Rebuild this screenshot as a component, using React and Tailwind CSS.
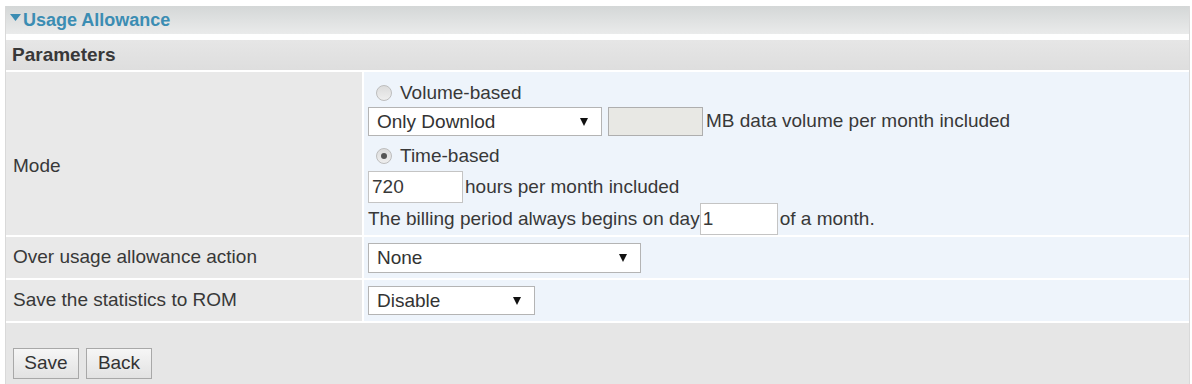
import { useState } from 'react';

const Arrow = () => (
  <svg width="8" height="8" viewBox="0 0 8 8" className="absolute right-[14px] top-1/2 -translate-y-1/2 pointer-events-none">
    <polygon points="0,0 8,0 4,8" fill="#111" />
  </svg>
);

const FakeSelect = ({ value, options, width, onChange }) => (
  <div className="relative h-full" style={{ width }}>
    <select
      value={value}
      onChange={(e) => onChange(e.target.value)}
      className="w-full h-full appearance-none bg-white border border-[#b4b4b4] pl-[8px] text-[#333] outline-none"
    >
      {options.map((o) => (
        <option key={o} value={o}>{o}</option>
      ))}
    </select>
    <Arrow />
  </div>
);

const Radio = ({ checked, onClick }) => (
  <span
    onClick={onClick}
    className="w-[16px] h-[16px] rounded-full border border-[#bdbdbd] bg-gradient-to-b from-[#dcdcdc] to-[#eeeeee] flex items-center justify-center cursor-pointer"
  >
    {checked && <span className="w-[6px] h-[6px] rounded-full bg-[#555]" />}
  </span>
);

export default function App() {
  const [mode, setMode] = useState('time');
  const [volType, setVolType] = useState('Only Downlod');
  const [hours, setHours] = useState('720');
  const [day, setDay] = useState('1');
  const [action, setAction] = useState('None');
  const [save, setSave] = useState('Disable');

  return (
    <div className="w-[1192px] h-[384px] bg-white pl-[5px] pr-[2px] pt-[6px] text-[19px] text-[#383838] font-['Liberation_Sans',Arial,sans-serif] overflow-hidden">
      <div className="h-full border-l border-r border-[#d9d9d9] flex flex-col">
        {/* header */}
        <div className="h-[28px] shrink-0 bg-gradient-to-b from-[#d4d7d7] to-[#eaebeb] flex items-center pl-[4px]">
          <svg width="11" height="7" viewBox="0 0 11 7" className="mr-[2px] -mt-[6px]">
            <polygon points="0,0 11,0 5.5,7" fill="#3b8db3" />
          </svg>
          <span className="font-bold text-[18px] text-[#3b8db3] pt-[1px]">Usage Allowance</span>
        </div>
        <div className="h-[6px] shrink-0 bg-white" />
        <div className="h-[30px] shrink-0 bg-gradient-to-b from-[#e6e6e6] to-[#dedede] flex items-center pl-[6px]">
          <span className="font-bold">Parameters</span>
        </div>
        <div className="h-[2px] shrink-0 bg-white" />

        {/* Mode */}
        <div className="flex h-[163px] shrink-0">
          <div className="w-[356px] shrink-0 bg-[#e9e9e9] flex items-center pl-[7px] pt-[26px]">Mode</div>
          <div className="w-[2px] shrink-0 bg-white" />
          <div className="flex-1 bg-[#eef4fb] pl-[4px] pt-[7px] flex flex-col">
            <div className="h-[28px] flex items-center pl-[8px]">
              <Radio checked={mode === 'volume'} onClick={() => setMode('volume')} />
              <span className="ml-[8px]">Volume-based</span>
            </div>
            <div className="h-[29px] flex items-center">
              <FakeSelect value={volType} onChange={setVolType} width={234} options={['Only Downlod', 'Only Upload', 'Download and Upload']} />
              <input
                disabled
                className="ml-[6px] w-[95px] h-full bg-[#e8e8e4] border border-[#aeaeae]"
              />
              <span className="ml-[3px]">MB data volume per month included</span>
            </div>
            <div className="mt-[5px] h-[30px] flex items-center pl-[8px]">
              <Radio checked={mode === 'time'} onClick={() => setMode('time')} />
              <span className="ml-[8px]">Time-based</span>
            </div>
            <div className="h-[32px] flex items-center">
              <input
                value={hours}
                onChange={(e) => setHours(e.target.value)}
                className="w-[95px] h-full bg-white border border-[#c4c4c4] pl-[3px] outline-none"
              />
              <span className="ml-[2px]">hours per month included</span>
            </div>
            <div className="h-[32px] flex items-center">
              <span>The billing period always begins on day</span>
              <input
                value={day}
                onChange={(e) => setDay(e.target.value)}
                className="w-[78px] h-full bg-white border border-[#c4c4c4] pl-[2px] outline-none"
              />
              <span className="ml-[2px]">of a month.</span>
            </div>
          </div>
        </div>
        <div className="h-[2px] shrink-0 bg-white" />

        {/* Over usage */}
        <div className="flex h-[41px] shrink-0">
          <div className="w-[356px] shrink-0 bg-[#e9e9e9] flex items-center pl-[7px]">Over usage allowance action</div>
          <div className="w-[2px] shrink-0 bg-white" />
          <div className="flex-1 bg-[#eef4fb] pl-[4px] flex items-center">
            <div className="h-[30px]">
              <FakeSelect value={action} onChange={setAction} width={273} options={['None', 'Disconnect', 'Warning']} />
            </div>
          </div>
        </div>
        <div className="h-[2px] shrink-0 bg-white" />

        {/* Save statistics */}
        <div className="flex h-[41px] shrink-0">
          <div className="w-[356px] shrink-0 bg-[#e9e9e9] flex items-center pl-[7px]">Save the statistics to ROM</div>
          <div className="w-[2px] shrink-0 bg-white" />
          <div className="flex-1 bg-[#eef4fb] pl-[4px] flex items-center">
            <div className="h-[29px]">
              <FakeSelect value={save} onChange={setSave} width={167} options={['Disable', 'Enable']} />
            </div>
          </div>
        </div>
        <div className="h-[2px] shrink-0 bg-white" />

        {/* buttons */}
        <div className="flex-1 bg-[#e6e6e6] flex items-start pt-[25px] pl-[7px] gap-[7px]">
          <button className="w-[66px] h-[31px] border border-[#a8a8a8] bg-gradient-to-b from-[#f6f6f6] to-[#e2e2e2] text-[#333]">Save</button>
          <button className="w-[66px] h-[31px] border border-[#a8a8a8] bg-gradient-to-b from-[#f6f6f6] to-[#e2e2e2] text-[#333]">Back</button>
        </div>
      </div>
    </div>
  );
}
